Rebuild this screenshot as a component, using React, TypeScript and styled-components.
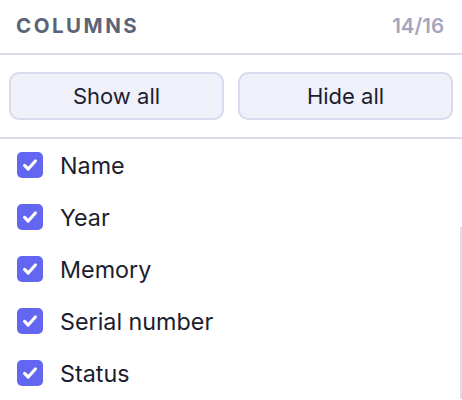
import React from 'react'
import styled, { createGlobalStyle } from 'styled-components'

const GlobalStyle = createGlobalStyle`
    html, body {
        margin: 0;
        padding: 0;
        background: #fff;
    }
    body {
        font-family: Inter, "Noto Sans", sans-serif;
        color: #1c1e30;
        -webkit-font-smoothing: antialiased;
    }
`

const Panel = styled.div`
    width: 462px;
    height: 400px;
    overflow: hidden;
    background: #fff;
`

const Header = styled.div`
    display: flex;
    align-items: center;
    justify-content: space-between;
    padding: 0 18px 0 16px;
    border-bottom: 2px solid #dadcee;
    box-sizing: border-box;
    height: 55px;
`

const Title = styled.div`
    font-size: 20.5px;
    font-weight: 700;
    letter-spacing: 2.5px;
    color: #5b6479;
    text-transform: uppercase;
    margin-top: -3px;
`

const Count = styled.div`
    font-size: 20.5px;
    font-weight: 600;
    color: #a3a6bc;
    margin-top: -3px;
`

const Actions = styled.div`
    display: grid;
    grid-template-columns: 1fr 1fr;
    gap: 14px;
    padding: 17px 9px 17px 9px;
    border-bottom: 2px solid #dadcee;
`

const ActionButton = styled.button`
    height: 48px;
    border: 2px solid #d8daef;
    border-radius: 10px;
    background: #eff0f9;
    font-family: Inter, "Noto Sans", sans-serif;
    font-size: 22px;
    color: #1c1e30;
    cursor: pointer;
    padding: 0;
`

const List = styled.div`
    position: relative;
`

const ScrollThumb = styled.div`
    position: absolute;
    right: 0;
    top: 88px;
    bottom: 0;
    width: 2px;
    background: #dcdcef;
`

const Row = styled.label`
    height: 52px;
    display: flex;
    align-items: center;
    gap: 17px;
    padding-left: 17px;
    font-size: 23.3px;
    color: #1c1e30;
    cursor: pointer;
`

const Box = styled.span<{ $checked: boolean }>`
    width: 26px;
    height: 26px;
    border-radius: 5px;
    flex: none;
    display: flex;
    align-items: center;
    justify-content: center;
    background: ${p => (p.$checked ? '#6366f1' : '#fff')};
    border: ${p => (p.$checked ? 'none' : '2px solid #c5c8dc')};
    box-sizing: border-box;
`

const Check: React.FC = () => (
    <svg width="18" height="18" viewBox="0 0 18 18" fill="none">
        <path d="M3.6 9.4 L7.2 13 L14.4 5" stroke="#fff" strokeWidth="3.2" strokeLinecap="round" strokeLinejoin="round" />
    </svg>
)

const columns = ['Name', 'Year', 'Memory', 'Serial number', 'Status']

const App: React.FC = () => {
    return (
        <Panel>
            <GlobalStyle />
            <Header>
                <Title>Columns</Title>
                <Count>14/16</Count>
            </Header>
            <Actions>
                <ActionButton>Show all</ActionButton>
                <ActionButton>Hide all</ActionButton>
            </Actions>
            <List>
                <ScrollThumb />
                {columns.map(c => (
                    <Row key={c}>
                        <Box $checked>
                            <Check />
                        </Box>
                        {c}
                    </Row>
                ))}
            </List>
        </Panel>
    )
}

export default App
